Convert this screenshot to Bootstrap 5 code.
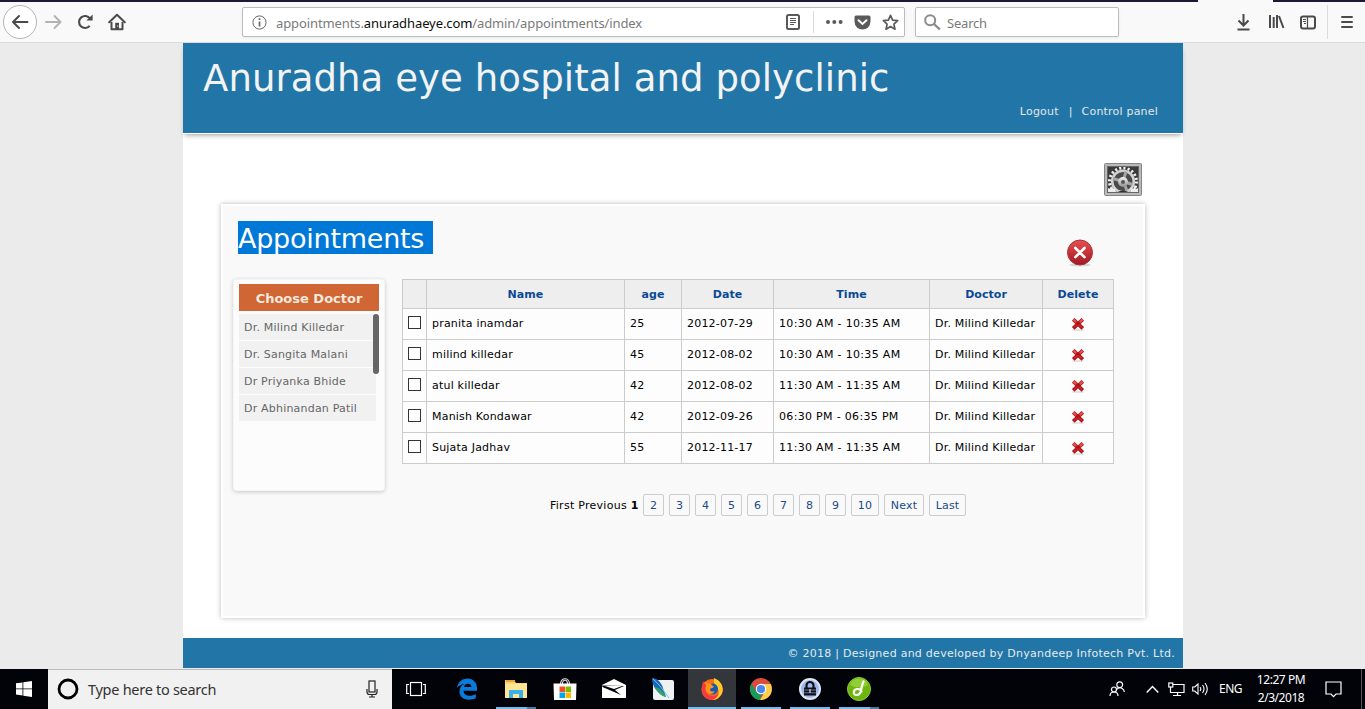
<!DOCTYPE html>
<html lang="en">
<head>
<meta charset="utf-8">
<title>Anuradha eye hospital and polyclinic</title>
<link href="https://cdn.jsdelivr.net/npm/bootstrap@5.3.0/dist/css/bootstrap.min.css" rel="stylesheet">
<style>
html,body{height:709px;overflow:hidden}
body{font:11px/14px "DejaVu Sans",sans-serif;color:#000;background:#ebebeb}
svg{display:block;flex:none}
.ui{font-family:"Noto Sans","Open Sans",sans-serif}
/* browser toolbar */
.browser{height:43px;background:#f9f9fa;border-bottom:1px solid #dcdcdc;flex:none}
.tabstrip{height:2px;background:#1a1a38}
.tabstrip .active-tab{width:75px;margin-left:1198px;height:2px;background:#f9f9fa}
.tools{height:40px;color:#4a4a4b}
.backbtn{width:34px;height:34px;border:1px solid #b5b5b5;border-radius:50%;background:#fff;margin-left:3px}
.field{height:30px;border:1px solid #bcbcbc;border-radius:2px;background:#fff;box-shadow:0 1px 3px rgba(0,0,0,.06);font-size:13px;color:#7a7a7a}
.field span{padding-top:2px}
.urlbar{width:663px;margin-left:116px}
.urltext{width:499px;margin-left:9px;white-space:nowrap;letter-spacing:-.1px}
.urltext b{font-weight:400;color:#0c0c0d}
.searchbar{width:204px;margin-left:10px}
.vline{width:1px;background:#dcdcdc}
/* site */
.site{width:1000px;height:625px;background:#fff;margin-left:183px;letter-spacing:.2px}
.masthead{height:90px;background:#2176a7;box-shadow:0 1px 0 #fff,0 4px 5px -2px rgba(0,0,0,.4);color:#f3f3f3;flex:none}
.masthead h1{font-size:37px;line-height:44px;font-weight:400;margin:0;padding:14px 0 0 20px;white-space:nowrap;letter-spacing:.08px}
.masthead .links{padding:4px 25px 0 0;color:#e4e7e9}
.gearrow{height:71px;padding:29px 40px 0 0}
.panelbox{width:924px;height:414px;margin-left:38px;background:#f9f9f9;border:2px solid #fff;box-shadow:0 0 5px rgba(0,0,0,.28);padding:15px 29px 0 10px}
.heading{background:#0078d7;color:#fff;font-size:27px;line-height:35px;height:33px;width:195px;margin:0 0 0 5px;font-weight:400;white-space:nowrap;letter-spacing:-.25px}
.chooser{width:152px;height:212px;background:#fcfcfc;border:1px dotted #eee;border-radius:4px;box-shadow:0 1px 4px rgba(0,0,0,.2);padding:4px 5px;flex:none}
.chooser h2{background:#cf6633;color:#f5e8df;font-size:13px;line-height:29px;height:27px;margin:0 0 3px;text-align:center;font-weight:700;letter-spacing:0}
.doctors{width:137px;color:#666}
.doctors .list-group-item{border:0;border-radius:0!important;background:#f1f1f1;height:26px;margin-bottom:1px;padding:7px 0 0 5px;color:#666;line-height:14px;white-space:nowrap}
.thumb{position:absolute;right:-3px;top:0;width:6px;height:60px;border-radius:3px;background:#666}
.appts{width:712px;table-layout:fixed;border-collapse:separate;border-spacing:0;border-left:1px solid #ccc;border-top:1px solid #ccc;margin:0;color:#000}
.appts>:not(caption)>*>*{border:0 solid #ccc;border-width:0 1px 1px 0;padding:0 0 0 5px;height:31px;background:#fdfdfd;white-space:nowrap;vertical-align:middle;line-height:14px}
.appts>thead>tr>th{height:29px;background:#eee;color:#0a4a94;padding:1px 0 0;text-align:center;letter-spacing:.05px}
.appts>tbody>tr>.c{padding:0 0 4px}
.appts .time{letter-spacing:.32px}
.chk{display:block;appearance:none;width:13px;height:13px;border:1px solid #333;background:#fff;margin:0 0 0 5px;border-radius:0}
.pager{gap:5px;margin:30px 0 0 317px;height:22px}
.pager a{border:1px solid #ccc;border-radius:2px;height:22px;width:21px;line-height:21px;text-align:center;color:#204a87;text-decoration:none}
.sitefoot{height:30px;background:#2176a7;color:#e6e9eb;line-height:31px;padding-right:8px;text-align:right;flex:none;letter-spacing:.26px}
/* taskbar */
.taskbar{height:40px;background:#020308;flex:none;color:#fff}
.start{width:48px}
.find{width:344px;height:40px;background:#f1f1f1;border-top:1px solid #bbb;color:#333;font-size:14.5px}
.app{width:48px;height:40px;margin-right:1px;position:relative}
.app.on{background:#33363b}
.bar{position:absolute;bottom:0;left:4px;width:40px;height:2px;background:#76b9ed}
.bar.multi{background:linear-gradient(90deg,#76b9ed 31px,#4c7aa2 31px)}
.clock{width:60px;font-size:12px;line-height:18px;text-align:center;letter-spacing:-.45px;white-space:nowrap}
</style>
</head>
<body class="d-flex flex-column">
<svg width="0" height="0" class="position-absolute"><defs>
<linearGradient id="rg" x2="0" y2="1"><stop stop-color="#e85050"/><stop offset="1" stop-color="#a01824"/></linearGradient>
<linearGradient id="gg" x2="0" y2="1"><stop stop-color="#f4f4f4"/><stop offset="1" stop-color="#8e8e8e"/></linearGradient>
<symbol id="del" viewBox="0 0 14 14"><path d="M1.5 13h11" stroke="#ddd" stroke-width="1.6"/><path d="M2.2 2.400l9.600 9M11.800 2.400l-9.600 9" stroke="#b31217" stroke-width="3.700"/><path d="M2.200 2.400l3 2.800M11.800 2.400l-3 2.800" stroke="#e05252" stroke-width="2.300"/><path d="M3 10.600l3.500-3.200M11 10.600L7.600 7.400" stroke="#c9282b" stroke-width="1.400"/></symbol>
</defs></svg>

<div class="browser ui">
 <div class="tabstrip"><div class="active-tab"></div></div>
 <div class="tools d-flex align-items-center">
  <div class="backbtn d-flex align-items-center justify-content-center"><svg width="18" height="16" fill="none" stroke="#4a4a4b" stroke-width="2" stroke-linecap="round" stroke-linejoin="round"><path d="M16.500 8H2M8 2L2 8l6 6"/></svg></div>
  <svg style="margin-left:8px" width="18" height="16" fill="none" stroke="#b3b3b5" stroke-width="2" stroke-linecap="round" stroke-linejoin="round"><path d="M1 8h14.500M9.500 2l6 6-6 6"/></svg>
  <svg style="margin-left:14px" width="17" height="16" fill="none" stroke="#4a4a4b" stroke-width="2.100"><path d="M12.700 11.800A6 6 0 1 1 13 4.500"/><path d="M15.600.6v6H9.400z" fill="#4a4a4b" stroke="none"/></svg>
  <svg style="margin-left:14px" width="18" height="18" fill="none" stroke="#4a4a4b" stroke-width="2" stroke-linejoin="round"><path d="M1.200 9.300L9 1.800l7.800 7.500" stroke-linecap="round"/><path d="M3.500 9v7.200h11V9"/><path d="M7.200 16V9.800h3.800V16z" fill="#4a4a4b" stroke="none"/><path d="M9.800 12.500v1.200" stroke="#fff" stroke-width="1"/></svg>
  <div class="field urlbar d-flex align-items-center">
   <svg style="margin-left:9px" width="15" height="15" fill="none" stroke="#666"><circle cx="7.500" cy="7.500" r="6.600"/><path d="M7.500 6.500v5M7.500 3.200v1.900" stroke-width="1.700"/></svg>
   <span class="urltext">appointments.<b>anuradhaeye.com</b>/admin/appointments/index</span>
   <svg style="margin-left:11px" width="14" height="16" fill="none" stroke="#5a5a5b"><rect x="1" y="1" width="12" height="14" rx="1.500" stroke-width="2"/><path d="M4 4.500h6M4 6.500h6M4 8.500h6M4 10.500h4"/></svg>
   <div class="vline" style="height:22px;margin-left:13px"></div>
   <svg style="margin-left:12px" width="17" height="6" fill="#5a5a5b"><circle cx="2" cy="3" r="2"/><circle cx="8.300" cy="3" r="2"/><circle cx="14.600" cy="3" r="2"/></svg>
   <svg style="margin-left:11px" width="17" height="15"><path d="M2 .5h13q1.500 0 1.500 1.600V6.500a8 8 0 0 1-16 0V2.100Q.5.5 2 .5z" fill="#5a5a5b"/><path d="M4.500 5.300l4 3.700 4-3.700" fill="none" stroke="#fff" stroke-width="2" stroke-linecap="round"/></svg>
   <svg style="margin-left:11px" width="17" height="17" fill="none" stroke="#5a5a5b" stroke-width="1.700" stroke-linejoin="round"><path d="M8.500 1.400l2.100 4.700 5.100.6-3.800 3.400 1.100 5.100-4.500-2.600L4 15.200l1.100-5.100L1.300 6.700l5.100-.6z"/></svg>
  </div>
  <div class="field searchbar d-flex align-items-center">
   <svg style="margin-left:8px" width="17" height="17" fill="none" stroke="#8a8a8a" stroke-width="2"><circle cx="6.200" cy="6.200" r="5"/><path d="M10 10l5.800 5.500" stroke-width="2.400"/></svg>
   <span style="margin-left:6px;letter-spacing:-.2px">Search</span>
  </div>
  <svg style="margin-left:118px" width="13" height="17" fill="none" stroke="#4a4a4b" stroke-width="2"><path d="M6.500 0v11M1.500 6.500l5 5 5-5M.5 15.500h12"/></svg>
  <svg style="margin-left:18px" width="17" height="16" fill="none" stroke="#4a4a4b" stroke-width="2"><path d="M2 1v13M5.700 3v11M9 1v13" /><path d="M11 2l4.500 12"/></svg>
  <svg style="margin-left:15px" width="16" height="15" fill="none" stroke="#4a4a4b"><rect x="1" y="1.500" width="14" height="12" rx="2" stroke-width="2"/><path d="M7.500 2v11M3 4.500h3M3 6.500h3M4 8.500h2" stroke-width="1.200"/></svg>
  <div class="vline" style="height:34px;margin-left:11px"></div>
  <svg style="margin-left:13px" width="12" height="12" fill="none" stroke="#4a4a4b" stroke-width="2" stroke-linecap="round"><path d="M1 1h10M1 6h10M1 11h10"/></svg>
 </div>
</div>

<div class="site d-flex flex-column">
 <header class="masthead">
  <h1>Anuradha eye hospital and polyclinic</h1>
  <div class="links d-flex justify-content-end"><span>Logout</span><span style="margin:0 9px 0 10px">|</span><span>Control panel</span></div>
 </header>
 <main class="flex-grow-1">
  <div class="gearrow d-flex justify-content-end">
   <svg width="40" height="36"><rect x="1.500" y="1.500" width="37" height="32" rx="1" fill="#b9b9b9" stroke="#858585"/><rect x="4.500" y="4.500" width="31" height="26" fill="#3b3b3b" stroke="#666"/><clipPath id="gc"><rect x="5" y="5" width="30" height="25"/></clipPath>
   <g clip-path="url(#gc)"><circle cx="20" cy="19.500" r="13.500" fill="none" stroke="#f2f2f2" stroke-width="3" stroke-dasharray="2.100 2.140"/><circle cx="20" cy="19.500" r="10.800" fill="#4b4b4b" stroke="#d2d2d2" stroke-width="2.600"/><path d="M20 19.500l3-10M20 19.500l-10-3M20 19.500l9.500 3M20 19.500l4 9" stroke="#a5a5a5" stroke-width="3"/><path d="M13 31q7-5 14 0z" fill="#333"/><circle cx="20" cy="20" r="5" fill="url(#gg)"/><circle cx="20" cy="20" r="2" fill="#555"/><path d="M5 30v-4l2 1 1-3 2 3 3-1-1 3 2 1zM35 30v-4l-2 1-1-3-2 3-3-1 1 3-2 1z" fill="#eee"/></g></svg>
  </div>
  <section class="panelbox">
   <div class="d-flex">
    <h3 class="heading">Appointments</h3>
    <svg style="margin:17px 0 0 632px" width="30" height="30"><ellipse cx="15" cy="27" rx="11" ry="1.500" fill="#d4d4d4"/><circle cx="15" cy="14.500" r="12.500" fill="url(#rg)" stroke="#a73338"/><path d="M10.300 10l9.200 9.200M19.500 10l-9.200 9.200" stroke="#fff" stroke-width="2.600" stroke-linecap="round"/></svg>
   </div>
   <div class="d-flex align-items-start" style="margin-top:11px">
    <aside class="chooser">
     <h2>Choose Doctor</h2>
     <div class="list-group doctors position-relative">
      <div class="list-group-item">Dr. Milind Killedar</div><div class="list-group-item">Dr. Sangita Malani</div><div class="list-group-item">Dr Priyanka Bhide</div><div class="list-group-item">Dr Abhinandan Patil</div>
      <span class="thumb" style="z-index:3"></span>
     </div>
    </aside>
    <div style="margin-left:17px">
     <table class="table appts">
      <colgroup><col style="width:24px"><col style="width:198px"><col style="width:57px"><col style="width:92px"><col style="width:156px"><col style="width:113px"><col style="width:71px"></colgroup>
      <thead><tr><th></th><th>Name</th><th>age</th><th>Date</th><th>Time</th><th>Doctor</th><th>Delete</th></tr></thead>
      <tbody>
       <tr><td class="c"><input type="checkbox" class="chk"></td><td>pranita inamdar</td><td>25</td><td>2012-07-29</td><td class="time">10:30 AM - 10:35 AM</td><td>Dr. Milind Killedar</td><td class="c"><svg class="mx-auto mt-1" width="14" height="14"><use href="#del"/></svg></td></tr>
       <tr><td class="c"><input type="checkbox" class="chk"></td><td>milind killedar</td><td>45</td><td>2012-08-02</td><td class="time">10:30 AM - 10:35 AM</td><td>Dr. Milind Killedar</td><td class="c"><svg class="mx-auto mt-1" width="14" height="14"><use href="#del"/></svg></td></tr>
       <tr><td class="c"><input type="checkbox" class="chk"></td><td>atul killedar</td><td>42</td><td>2012-08-02</td><td class="time">11:30 AM - 11:35 AM</td><td>Dr. Milind Killedar</td><td class="c"><svg class="mx-auto mt-1" width="14" height="14"><use href="#del"/></svg></td></tr>
       <tr><td class="c"><input type="checkbox" class="chk"></td><td>Manish Kondawar</td><td>42</td><td>2012-09-26</td><td class="time">06:30 PM - 06:35 PM</td><td>Dr. Milind Killedar</td><td class="c"><svg class="mx-auto mt-1" width="14" height="14"><use href="#del"/></svg></td></tr>
       <tr><td class="c"><input type="checkbox" class="chk"></td><td>Sujata Jadhav</td><td>55</td><td>2012-11-17</td><td class="time">11:30 AM - 11:35 AM</td><td>Dr. Milind Killedar</td><td class="c"><svg class="mx-auto mt-1" width="14" height="14"><use href="#del"/></svg></td></tr>
      </tbody>
     </table>
    </div>
   </div>
   <nav class="pager d-flex align-items-center" style="margin-top:3px">
    <span class="text-nowrap" style="width:88px;padding-top:1px;letter-spacing:.27px">First Previous <b>1</b></span>
    <a href="#">2</a><a href="#">3</a><a href="#">4</a><a href="#">5</a><a href="#">6</a><a href="#">7</a><a href="#">8</a><a href="#">9</a><a href="#" style="width:28px">10</a><a href="#" style="width:40px">Next</a><a href="#" style="width:37px">Last</a>
   </nav>
  </section>
 </main>
 <footer class="sitefoot">© 2018 | Designed and developed by Dnyandeep Infotech Pvt. Ltd.</footer>
</div>
<div style="height:1px;flex:none"></div>

<div class="taskbar ui d-flex align-items-center">
 <div class="start d-flex justify-content-center"><svg width="16" height="16" fill="#fff"><path d="M0 2.300l6.500-.9v6.100H0zM7.300 1.300L16 0v7.500H7.300zM0 8.300h6.500v6.200L0 13.600zM7.300 8.300H16V16l-8.700-1.300z"/></svg></div>
 <div class="find d-flex align-items-center">
  <svg style="margin:-1px 0 0 9px" width="22" height="22"><circle cx="11" cy="11" r="9" fill="none" stroke="#000" stroke-width="2.800"/></svg>
  <span class="text-nowrap" style="margin:-2px 0 0 9px;width:270px;letter-spacing:-.28px">Type here to search</span>
  <svg style="margin:-1px 0 0 8px" width="12" height="18" fill="none" stroke="#222" stroke-width="1.200"><rect x="3" y="1" width="6" height="11"/><path d="M1 9v3q0 2.500 2.500 2.500h5Q11 14.500 11 12V9M6 14.500V17M3 17h6"/></svg>
 </div>
 <div class="app d-flex align-items-center justify-content-center" style="margin-right:3px"><svg width="20" height="16" fill="none" stroke="#fff" stroke-width="1.200"><rect x="4.500" y="1.500" width="11" height="13"/><path d="M3 3.500H.7v9H3M17 3.500h2.300v9H17"/></svg></div>
 <div class="app d-flex align-items-center justify-content-center"><svg width="22" height="22" viewBox="0 0 22 22"><path d="M1 10C2 4 6 .5 11.500.5 17.500.5 21 5 21 10v2.800H7.500c.3 6 8 6 12.300 3.200v4.300C12 23.700 3.500 21 3.500 13.500c0-4 2-6.300 5-7.500-3 .2-5.500 1.500-7.500 4zM8 9h7.500C15.300 4.500 8.800 4.500 8 9z" fill="#0a7bd8" fill-rule="evenodd"/></svg></div>
 <div class="app d-flex align-items-center justify-content-center"><svg width="22" height="20"><path d="M0 1h9l2 3h11v15H0z" fill="#f8d775"/><path d="M1 1h9v2H1z" fill="#e8a33d"/><path d="M0 5h22v14H0z" fill="#ffe594"/><path d="M4 19v-8h14v8h-4v-4H8v4z" fill="#38b1e8"/></svg><i class="bar multi"></i></div>
 <div class="app d-flex align-items-center justify-content-center"><svg width="24" height="24"><path d="M7.500 7c0-7 9-7 9 0M9.500 7c0-5 5-5 5 0" fill="none" stroke="#ddd" stroke-width="1.200"/><path d="M.5 6.500h23L23 23H1z" fill="#fff"/><path d="M6.500 9.500H12V15H6.500z" fill="#f25022"/><path d="M12.500 9.500H18V15h-5.500z" fill="#7fba00"/><path d="M6.500 15.500H12V21H6.500z" fill="#00a4ef"/><path d="M12.500 15.500H18V21h-5.500z" fill="#ffb900"/></svg></div>
 <div class="app d-flex align-items-center justify-content-center"><svg width="24" height="20"><path d="M0 6L12 0l12 6V19H0z" fill="#fff"/><path d="M0 6.500l22 .5-9 4 6 5L.5 8z" fill="#020308"/><path d="M3 7h17l-8 3z" fill="#fff"/></svg></div>
 <div class="app d-flex align-items-center justify-content-center"><svg width="22" height="23"><rect x="1" y="2" width="21" height="20" rx="2" fill="#eef1f2"/><path d="M0 0c5 0 9 4 11 10l3 9C6 16 0 9 0 0z" fill="#1768bd"/><path d="M3 9c5 1 9 5 11 10-5-1-9-5-11-10z" fill="#35a06b"/><path d="M1 1c6 5 10 11 16 19" fill="none" stroke="#7fc4e8"/></svg></div>
 <div class="app on d-flex align-items-center justify-content-center"><svg width="22" height="22"><circle cx="11" cy="11.500" r="10.500" fill="#ff6a17"/><path d="M.8 9C-.5 17 5 22 11 22c7 0 12-6 10.500-13-2 6-6 9-10 9C6 18 3 13 5 8L2 3z" fill="#f43a45"/><path d="M13 0c8 3 11 11 7 17-2 3-5 5-9 5 6-2 8-7 6-11-2-5-5-5-4-11z" fill="#ffc928"/><circle cx="11.500" cy="11" r="5.500" fill="#155ab0"/><path d="M3 4c3 1 6 1 8 3l2 2-4 2c0 3 3 3 5 2-2 4-8 4-9-1-1-3 1-4 0-6z" fill="#ff9518"/></svg><i class="bar" style="left:0;width:48px"></i></div>
 <div class="app d-flex align-items-center justify-content-center"><svg width="22" height="22"><circle cx="11" cy="11" r="11" fill="#dd4b3e"/><path d="M1.500 5.500l5 8.500 5 2.500-1 5.500C2 21.500-2.500 13 1.500 5.500z" fill="#159c5b"/><path d="M11 6h9.800c3.500 9-3 16.500-10.800 16l5-8.500z" fill="#fdd04b"/><circle cx="11" cy="11" r="5.200" fill="#fff"/><circle cx="11" cy="11" r="4.100" fill="#4489f4"/></svg><i class="bar"></i></div>
 <div class="app d-flex align-items-center justify-content-center"><svg width="22" height="22"><circle cx="11" cy="11" r="10" fill="#9db7ef" stroke="#dfe7f5" stroke-width="2"/><path d="M7.500 10V7.500a3.500 3.500 0 0 1 7 0V10" fill="none" stroke="#111" stroke-width="2.200"/><path d="M5 9.500h12v8H5z" fill="#111"/><path d="M5 12h12M5 14.800h12" stroke="#8b9cc4" stroke-width=".7"/><path d="M10.200 11h1.600v4h-1.600z" fill="#9db7ef"/></svg><i class="bar"></i></div>
 <div class="app d-flex align-items-center justify-content-center"><svg width="24" height="24"><circle cx="12" cy="12" r="11.500" fill="#6db60d" stroke="#8ccb35"/><path d="M3 8a9.500 9.500 0 0 1 18 0q-9 5-18 0z" fill="#a4dc4e" opacity=".65"/><path d="M16.500 4.500c-2 4-2 7-2.500 9-.5 3-2 4.500-4.500 4.500-4 0-3.500-6 1-6 2 0 3.500.8 4 2.500" fill="none" stroke="#fff" stroke-width="2.200" stroke-linecap="round"/></svg><i class="bar multi"></i></div>
 <svg style="margin-left:225px" width="16" height="16" fill="none" stroke="#fff" stroke-width="1.200"><circle cx="10.700" cy="3.700" r="2.900"/><path d="M7.800 8.200q2.900-2.400 5.400-.8 2 1.300 2.100 3.600"/><circle cx="5" cy="8.500" r="2.500"/><path d="M1 15q0-4 4-4t4 4"/></svg>
 <svg style="margin-left:21px" width="13" height="9" fill="none" stroke="#fff" stroke-width="1.400"><path d="M.7 7.500l5.800-6 5.800 6"/></svg>
 <svg style="margin-left:9px" width="17" height="15" fill="none" stroke="#fff" stroke-width="1.200"><path d="M5 2.500h11v8H2.500V6M9.500 10.500v3M5 13.500h8M2.500 5v5"/><rect x=".8" y="1" width="4" height="4"/></svg>
 <svg style="margin-left:7px" width="17" height="14" fill="none" stroke="#fff" stroke-width="1.100"><path d="M.7 5h2L6 2v10L2.700 9h-2zM8 5q1.500 2 0 4M10.500 3q3 4 0 8M13 1q4.500 6 0 12"/></svg>
 <span class="text-nowrap" style="margin-left:10px;width:32px;font-size:12px;letter-spacing:-.5px">ENG</span>
 <div class="clock">12:27 PM<br>2/3/2018</div>
 <svg style="margin-left:14px" width="17" height="17" fill="none" stroke="#fff" stroke-width="1.200"><path d="M1 1h15v12h-5l-2.500 2.700L6 13H1z"/></svg>
 <div style="width:1px;height:40px;margin-left:19px;background:#555"></div>
</div>
<script src="https://cdn.jsdelivr.net/npm/bootstrap@5.3.0/dist/js/bootstrap.bundle.min.js"></script>
</body>
</html>
